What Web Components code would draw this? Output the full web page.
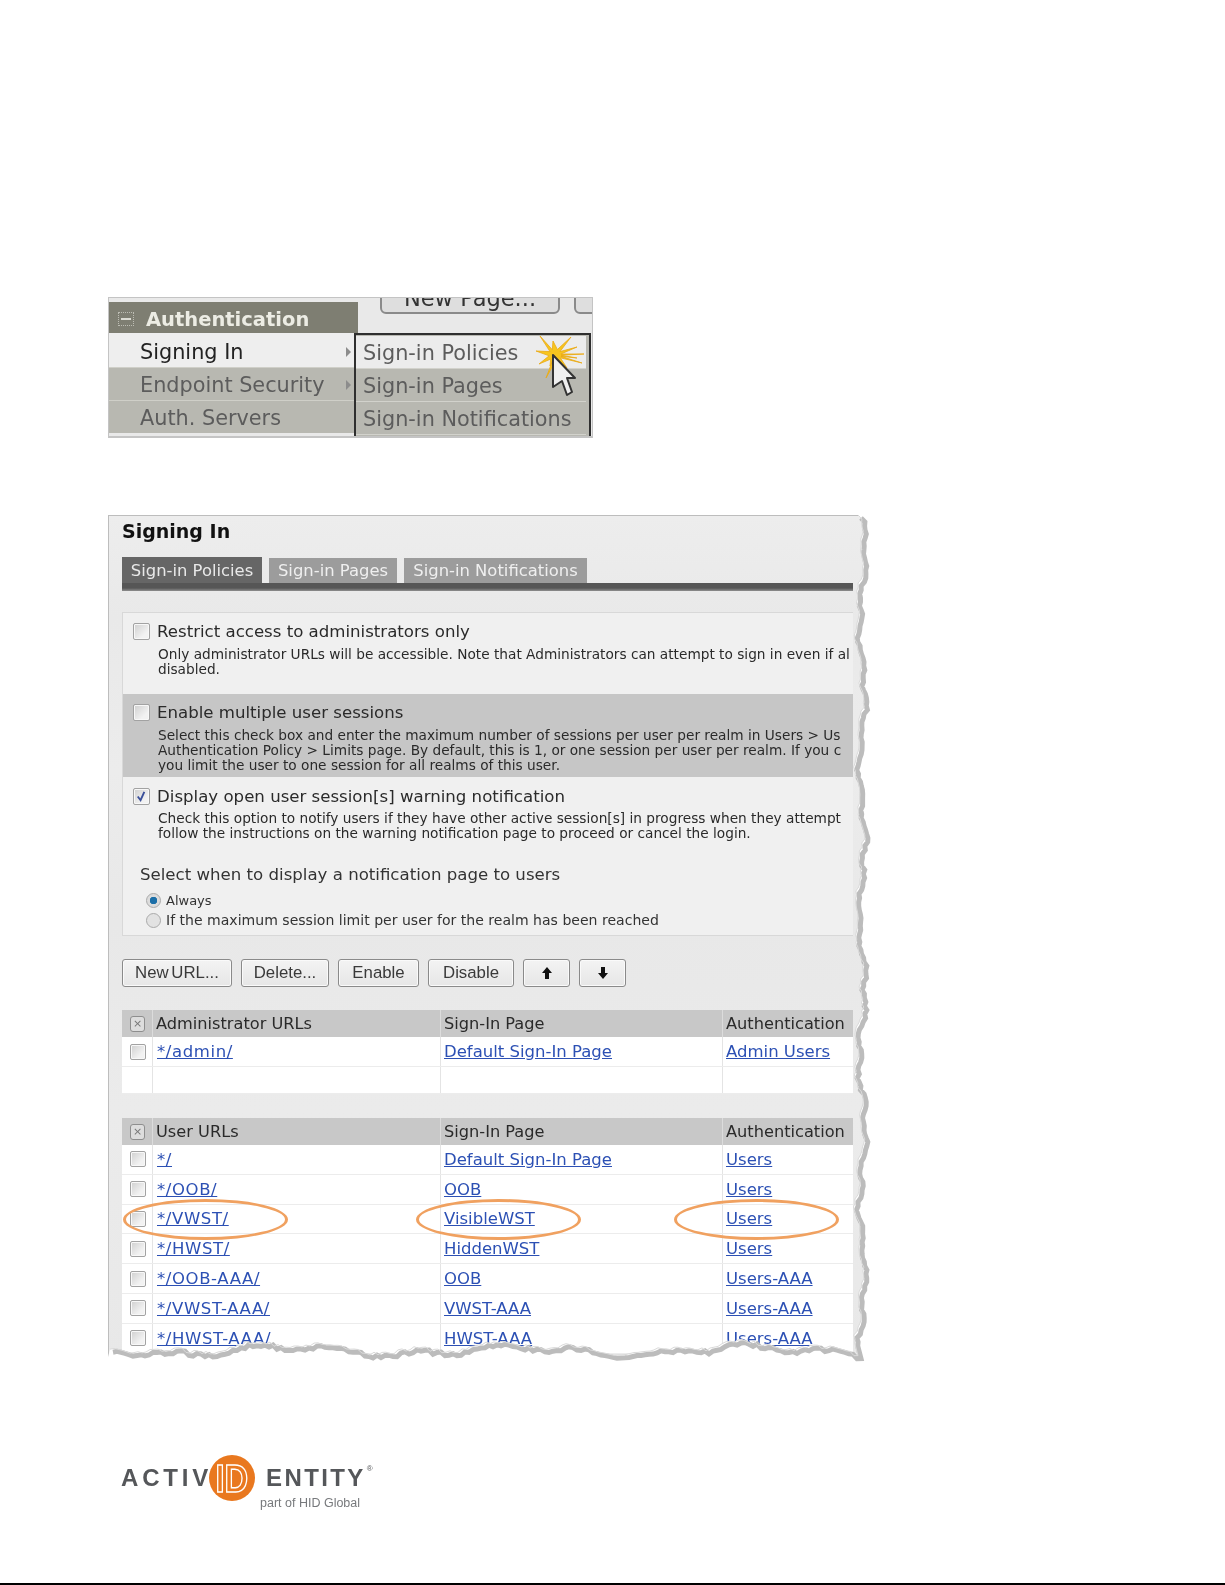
<!DOCTYPE html>
<html>
<head>
<meta charset="utf-8">
<style>
  html, body { margin: 0; background: #fff; }
  body { width: 1225px; height: 1585px; overflow: hidden; position: relative; font-family: "DejaVu Sans", sans-serif; }
  .page { padding: 297px 0 0 108px; }
</style>
</head>
<body>
<div class="page">
  <nav-figure></nav-figure>
  <policy-figure>
    <policy-panel style="height:81px" heading="Restrict access to administrators only">
      <div>Only administrator URLs will be accessible. Note that Administrators can attempt to sign in even if al</div>
      <div>disabled.</div>
    </policy-panel>
    <policy-panel style="height:83px" heading="Enable multiple user sessions" shade>
      <div>Select this check box and enter the maximum number of sessions per user per realm in Users &gt; Us</div>
      <div>Authentication Policy &gt; Limits page. By default, this is 1, or one session per user per realm. If you c</div>
      <div>you limit the user to one session for all realms of this user.</div>
    </policy-panel>
    <policy-panel style="height:158px" heading="Display open user session[s] warning notification" checked>
      <div style="margin-top:1px">Check this option to notify users if they have other active session[s] in progress when they attempt</div>
      <div>follow the instructions on the warning notification page to proceed or cancel the login.</div>
      <notify-choice slot="extra"></notify-choice>
    </policy-panel>
  </policy-figure>
  <brand-logo></brand-logo>
</div>
<div style="position:absolute;left:0;right:0;bottom:0;height:2px;background:#000"></div>

<script>
class TickBox extends HTMLElement {
    constructor() {
        super();
        const checked = this.hasAttribute('checked');
        this.attachShadow({mode: 'open'}).innerHTML = `<style>
            :host { display: block; width: var(--size, 16px); height: var(--size, 16px); box-sizing: border-box;
                border: 1px solid #a2a2a2; border-radius: 2px;
                background: linear-gradient(135deg, #cfcfcf, #f2f2f2 70%); box-shadow: inset 0 0 0 1px #f8f8f8; }
            svg { display: block; width: 100%; height: 100%; }
        </style>${checked ? '<svg viewBox="0 0 16 16"><path d="M4 8l3 4 4-9" fill="none" stroke="#3a4f9a" stroke-width="2"/></svg>' : ''}`;
    }
}
customElements.define('tick-box', TickBox);

class NavFigure extends HTMLElement {
    constructor() {
        super();
        this.attachShadow({mode: 'open'}).innerHTML = `<style>
            :host { display: block; width: 485px; height: 141px; box-sizing: border-box; position: relative; overflow: hidden;
                border: 1px solid #c4c4c4; border-bottom-width: 2px; background: #e9e9e9; filter: blur(.5px);
                font: 20.8px "DejaVu Sans", sans-serif; color: #5c5c5c; }
            .cols { display: flex; height: 100%; }
            .left { width: 249px; flex: none; }
            .head { height: 31px; margin-top: 4px; background: #7e7e72; color: #ecece4; font-weight: bold;
                display: flex; align-items: center; padding: 3px 0 0 9px; box-sizing: border-box; gap: 12px; font-size: 19.5px; }
            .head i { width: 16px; height: 14px; box-sizing: border-box; border: 1px dotted #bdbdb4; display: flex; align-items: center; justify-content: center; }
            .head i::after { content: ""; width: 10px; height: 2px; background: #dcdcd4; }
            .item { height: 33px; display: flex; align-items: center; justify-content: space-between; padding: 2px 7px 0 31px; box-sizing: border-box;
                background: #b8b8b1; border-top: 1px solid #cfcfc8; }
            .item.on { background: #eeeeee; color: #222; height: 34px; border-top: 0; padding-top: 3px; }
            .item b { width: 0; height: 0; border: 5px solid transparent; border-left-color: #8c8c8c; border-right: 0; }
            .right { flex: 1; display: flex; flex-direction: column; min-width: 0; }
            .tools { height: 35px; display: flex; gap: 14px; padding-left: 22px; overflow: hidden; }
            .tools span { display: block; flex: none; width: 180px; height: 31px; margin-top: -15px; box-sizing: border-box; border: 2px solid #8a8a8a;
                border-radius: 6px; background: #dedede; text-align: center; line-height: 26px; color: #333; font-size: 22.5px; }
            .tools span.next { width: 40px; }
            .sub { flex: 1; box-sizing: border-box; border: solid #2f2f2f; border-width: 2px 2px 0 2px; margin: 0 1px 0 -4px; padding: 1px 3px 0 0; background: #b8b8b1; }
            .sub div { height: 33px; display: flex; align-items: center; padding: 2px 0 0 7px; box-sizing: border-box; background: #b8b8b1; border-bottom: 1px solid #d2d2cc; }
            .sub div.on { background: #ececec; }
        </style>
        <div class="cols">
            <div class="left">
                <div class="head"><i></i><span>Authentication</span></div>
                <div class="item on"><span>Signing In</span><b></b></div>
                <div class="item"><span>Endpoint Security</span><b></b></div>
                <div class="item"><span>Auth. Servers</span></div>
            </div>
            <div class="right">
                <div class="tools"><span>New Page...</span><span class="next"></span></div>
                <div class="sub">
                    <div class="on">Sign-in Policies</div>
                    <div>Sign-in Pages</div>
                    <div>Sign-in Notifications</div>
                </div>
            </div>
        </div>
        <svg style="position:absolute;left:420px;top:32px" width="62" height="70" viewBox="0 0 62 70">
            <path d="${this._burst()}" fill="#f7c51e" stroke="#eaa814" stroke-width=".8"/>
            <path d="M24 25 L24 57 L33 51 L38 65 L43 62 L38 48 L46 48 Z" fill="#efefef" stroke="#333" stroke-width="2" stroke-linejoin="round"/>
        </svg>`;
    }

    // thin spiky star behind the cursor
    _burst() {
        const cx = 26, cy = 25;
        const rays = [[-15, -19], [-2, -14], [16, -18], [22, -8], [29, -1], [22, 3], [27, 8], [12, 13], [-9, 23], [-5, 11], [-16, 9], [-19, -4]];
        const out = [];
        rays.forEach((r, i) => {
            const next = rays[(i + 1) % rays.length];
            const mx = r[0] + next[0], my = r[1] + next[1], len = Math.hypot(mx, my) || 1;
            out.push((cx + r[0]) + ' ' + (cy + r[1]));
            out.push((cx + mx / len * 6).toFixed(1) + ' ' + (cy + my / len * 6).toFixed(1));
        });
        return 'M' + out.join(' L') + ' Z';
    }
}
customElements.define('nav-figure', NavFigure);

class PolicyPanel extends HTMLElement {
    constructor() {
        super();
        const heading = this.getAttribute('heading');
        const checked = this.hasAttribute('checked') ? 'checked' : '';
        this.attachShadow({mode: 'open'}).innerHTML = `<style>
            :host { display: block; box-sizing: border-box; padding: 8px 0 0 10px; background: #f0f0f0; color: #2a2a2a; white-space: nowrap; overflow: hidden; }
            :host([shade]) { background: #c6c6c6; }
            :host([checked]) { padding-top: 9px; }
            .top { display: flex; align-items: center; gap: 7px; font-size: 16.6px; height: 20px; --size: 17px; }
            .desc { margin: 6px 0 0 25px; font-size: 13.7px; line-height: 15px; }
            :host([checked]) .desc { margin-top: 5px; }
        </style>
        <div class="top"><tick-box ${checked}></tick-box><span>${heading}</span></div>
        <div class="desc"><slot></slot></div>
        <slot name="extra"></slot>`;
    }
}
customElements.define('policy-panel', PolicyPanel);

class NotifyChoice extends HTMLElement {
    constructor() {
        super();
        this.attachShadow({mode: 'open'}).innerHTML = `<style>
            :host { display: block; margin: 24px 0 0 7px; font-size: 16.6px; color: #333; }
            .title { height: 20px; line-height: 20px; }
            .opt { display: flex; align-items: center; gap: 5px; height: 20px; margin-left: 6px; font-size: 14.05px; }
            .first { margin-top: 5px; font-size: 13px; }
            i { width: 15px; height: 15px; box-sizing: border-box; border-radius: 50%; border: 1px solid #aaa; background: #e2e2e2; flex: none; display: block; }
            i.on { background: radial-gradient(circle, #1c6fa8 0 3.5px, #dcdcdc 4px); }
        </style>
        <div class="title">Select when to display a notification page to users</div>
        <div class="opt first"><i class="on"></i><span>Always</span></div>
        <div class="opt"><i></i><span>If the maximum session limit per user for the realm has been reached</span></div>`;
    }
}
customElements.define('notify-choice', NotifyChoice);

class ActionButton extends HTMLElement {
    constructor() {
        super();
        this.attachShadow({mode: 'open'}).innerHTML = `<style>
            :host { display: flex; align-items: center; justify-content: center; box-sizing: border-box; height: 28px;
                border: 1px solid #8a8a8a; border-radius: 3px; background: linear-gradient(#f3f3f3, #e6e6e6); box-shadow: inset 0 0 0 1px #fafafa;
                font: 16.8px "Liberation Sans", sans-serif; color: #3a3a3a; word-spacing: -2px; }
        </style><slot></slot>`;
    }
}
customElements.define('action-button', ActionButton);

class UrlRow extends HTMLElement {
    constructor() {
        super();
        const url = this.getAttribute('url'), page = this.getAttribute('page'), auth = this.getAttribute('auth');
        const filled = url !== null;
        this.attachShadow({mode: 'open'}).innerHTML = `<style>
            :host { display: grid; grid-template-columns: 31px 288px 282px 1fr; height: 29.8px; box-sizing: border-box;
                background: #fff; border-bottom: 1px solid #ececec; font-size: 16.5px; }
            div { display: flex; align-items: center; border-right: 1px solid #e4e4e4; padding-left: 3px; box-sizing: border-box; overflow: hidden; white-space: nowrap; }
            div.tick { padding: 0 0 0 8px; }
            div.url { padding-left: 4px; letter-spacing: .6px; }
            div:last-child { border: 0; }
            a { color: #2c50b4; text-decoration: underline; }
        </style>
        <div class="tick">${filled ? '<tick-box></tick-box>' : ''}</div>
        <div class="url">${filled ? `<a>${url}</a>` : ''}</div>
        <div>${filled ? `<a>${page}</a>` : ''}</div>
        <div>${filled ? `<a>${auth}</a>` : ''}</div>`;
    }
}
customElements.define('url-row', UrlRow);

class UrlTable extends HTMLElement {
    constructor() {
        super();
        this.attachShadow({mode: 'open'}).innerHTML = `<style>
            :host { display: block; font-size: 16.2px; color: #2a2a2a; }
            .head { display: grid; grid-template-columns: 31px 288px 282px 1fr; height: 27px; background: #c8c8c8; }
            .head div { display: flex; align-items: center; padding-left: 3px; border-right: 1px solid #dcdcdc; box-sizing: border-box; white-space: nowrap; overflow: hidden; }
            .head div:last-child { border: 0; }
            .head div:first-child { padding: 0 0 0 8px; }
            .all { width: 15px; height: 16px; box-sizing: border-box; border: 1px solid #8e8e8e; border-radius: 3px; background: #ddd; color: #777; font-size: 11px; line-height: 14px; text-align: center; }
        </style>
        <div class="head">
            <div><span class="all">×</span></div>
            <div>${this.getAttribute('title')}</div>
            <div>Sign-In Page</div>
            <div>Authentication</div>
        </div>
        <slot></slot>`;
    }
}
customElements.define('url-table', UrlTable);

class PolicyFigure extends HTMLElement {
    constructor() {
        super();
        this.attachShadow({mode: 'open'}).innerHTML = `<style>
            :host { display: block; position: relative; width: 772px; height: 850px; margin-top: 77px; overflow: hidden;
                font: 15px "DejaVu Sans", sans-serif; color: #222; filter: blur(.45px); }
            .sheet { box-sizing: border-box; width: 772px; height: 850px; padding: 0 0 0 13px; border-left: 1px solid #bdbdbd; border-top: 1px solid #bdbdbd;
                background: linear-gradient(#ededed, #e9e9e9 12%, #ececec 30%, #e8e8e8 48%, #ebebeb 70%, #e8e8e8); }
            h1 { margin: 0 0 13px; height: 29px; display: flex; align-items: center; font: bold 19px "DejaVu Sans", sans-serif; color: #111; white-space: nowrap; }
            .tabs { display: flex; width: 731px; height: 25px; align-items: flex-end; }
            .tabs span { display: flex; align-items: center; justify-content: center; height: 25px; background: #9c9c9c; color: #efefef; font-size: 16.4px; white-space: nowrap; box-sizing: border-box; }
            .tabs span.on { background: #666; height: 26px; margin-top: -1px; color: #e8e8e8; }
            .rule { width: 731px; height: 8px; background: linear-gradient(#565656 0 5px, #8e8e8e); }
            .box { width: 731px; margin-top: 21px; border: 1px solid #d8d8d8; border-right: 0; box-sizing: border-box; }
            .tools { display: flex; gap: 9px; margin: 23px 0 23px 0; }
            .gap { height: 24px; width: 731px; }
            .tables { width: 731px; height: 400px; overflow: hidden; }
            .ring { position: absolute; box-sizing: border-box; width: 165px; height: 41px; top: 684px; border: 3px solid #f0a160; border-radius: 50%; }
        </style>
        <div class="sheet">
            <h1>Signing In</h1>
            <div class="tabs">
                <span class="on" style="width:140px">Sign-in Policies</span>
                <span style="width:128px;margin-left:7px">Sign-in Pages</span>
                <span style="width:183px;margin-left:7px">Sign-in Notifications</span>
            </div>
            <div class="rule"></div>
            <div class="box">
                <slot></slot>
            </div>
            <div class="tools">
                <action-button style="width:110px">New URL...</action-button>
                <action-button style="width:88px">Delete...</action-button>
                <action-button style="width:81px">Enable</action-button>
                <action-button style="width:86px">Disable</action-button>
                <action-button style="width:47px"><svg width="14" height="14" viewBox="0 0 14 14"><path d="M7 1l5 6H9v6H5V7H2z" fill="#111"/></svg></action-button>
                <action-button style="width:47px"><svg width="14" height="14" viewBox="0 0 14 14"><path d="M7 13l5-6H9V1H5v6H2z" fill="#111"/></svg></action-button>
            </div>
            <div class="tables">
                <url-table title="Administrator URLs">
                    <url-row style="height:30px" url="*/admin/" page="Default Sign-In Page" auth="Admin Users"></url-row>
                    <url-row style="height:27px"></url-row>
                </url-table>
                <div class="gap"></div>
                <url-table title="User URLs">
                    <url-row url="*/" page="Default Sign-In Page" auth="Users"></url-row>
                    <url-row url="*/OOB/" page="OOB" auth="Users"></url-row>
                    <url-row url="*/VWST/" page="VisibleWST" auth="Users"></url-row>
                    <url-row url="*/HWST/" page="HiddenWST" auth="Users"></url-row>
                    <url-row url="*/OOB-AAA/" page="OOB" auth="Users-AAA"></url-row>
                    <url-row url="*/VWST-AAA/" page="VWST-AAA" auth="Users-AAA"></url-row>
                    <url-row url="*/HWST-AAA/" page="HWST-AAA" auth="Users-AAA"></url-row>
                </url-table>
            </div>
        </div>
        <span class="ring" style="left:15px"></span>
        <span class="ring" style="left:308px"></span>
        <span class="ring" style="left:566px"></span>
        ${this._tear()}`;
    }

    // torn paper edge along the right and bottom of the screenshot
    _tear() {
        let seed = 7;
        const rnd = () => (seed = (seed * 16807) % 2147483647) / 2147483647;
        const pts = [];
        for (let y = 0; y < 832; y += 4) {
            pts.push([750 + 3 * Math.sin(y / 23) + 2 * Math.sin(y / 7) + rnd() * 2.5, y]);
        }
        for (let x = 750; x > -2; x -= 4) {
            pts.push([x, 831 + 4 * Math.sin(x / 37) + 3 * Math.sin(x / 13) + rnd() * 4]);
        }
        const line = pts.map(p => p[0].toFixed(1) + ' ' + p[1].toFixed(1)).join(' L');
        return `<svg style="position:absolute;left:0;top:0" width="772" height="850" viewBox="0 0 772 850">
            <path d="M${line} L-2 850 L772 850 L772 0 Z" fill="#fff"/>
            <path d="M${line}" transform="translate(3 3)" fill="none" stroke="#bcbcbc" stroke-width="5"/>
            <path d="M${line}" fill="none" stroke="#dadada" stroke-width="1"/>
        </svg>`;
    }
}
customElements.define('policy-figure', PolicyFigure);

class BrandLogo extends HTMLElement {
    constructor() {
        super();
        this.attachShadow({mode: 'open'}).innerHTML = `<style>
            :host { display: block; margin: 89px 0 0 13px; width: 270px; font-family: "Liberation Sans", sans-serif; color: #55575a; filter: blur(.5px); }
            .mark { display: flex; align-items: center; height: 47px; font-size: 24px; font-weight: bold; }
            .a { letter-spacing: 3.8px; }
            .e { letter-spacing: 2.4px; }
            .mark svg { margin: 0 11px 0 -3px; flex: none; }
            sup { font-size: 8px; font-weight: normal; align-self: flex-start; margin: 10px 0 0 1px; }
            .sub { font-size: 12.5px; color: #77797c; margin: -5px 0 0 139px; white-space: nowrap; }
        </style>
        <div class="mark">
            <span class="a">ACTIV</span>
            <svg width="46" height="46" viewBox="0 0 46 46">
                <circle cx="23" cy="23" r="23" fill="#e9781f"/>
                <text transform="translate(6.5 37) scale(.84 1)" font-family="Liberation Sans" font-size="39" fill="none" stroke="#fff" stroke-width="1.5">ID</text>
            </svg>
            <span class="e">ENTITY</span><sup>®</sup>
        </div>
        <div class="sub">part of HID Global</div>`;
    }
}
customElements.define('brand-logo', BrandLogo);
</script>
</body>
</html>
